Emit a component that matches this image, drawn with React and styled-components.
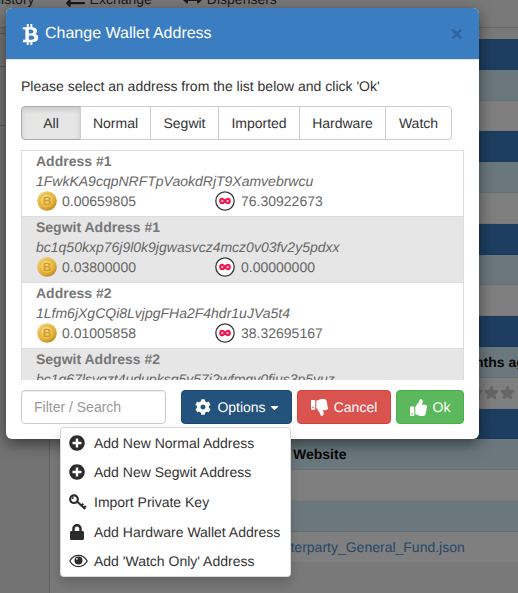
import React from "react";
import styled, { createGlobalStyle } from "styled-components";
import {
  FaBtc,
  FaCaretDown,
  FaCog,
  FaExchangeAlt,
  FaArrowsAltH,
  FaLock,
  FaPlusCircle,
  FaStar,
  FaThumbsDown,
  FaThumbsUp,
} from "react-icons/fa";

const GlobalStyle = createGlobalStyle`
  html, body {
    margin: 0;
    padding: 0;
    height: 593px;
    overflow: hidden;
    background: #fff;
    font-family: "Liberation Sans", Arial, sans-serif;
    font-size: 14px;
    color: #333;
    text-rendering: geometricPrecision;
  }
`;

const Page = styled.div`
  position: relative;
  width: 518px;
  height: 593px;
  overflow: hidden;
  background: #f2f2f2;
`;

/* page behind the modal */
const NavTabs = styled.div`
  display: flex;
  height: 27px;
  padding-left: 0;
  border-bottom: 1px solid #ccc;
  line-height: 20px;
`;

const NavTab = styled.span`
  display: flex;
  align-items: center;
  gap: 5px;
  height: 20px;
  margin-top: -11px;
  margin-left: ${(p) => p.$left}px;
`;

const Content = styled.div`
  display: flex;
  height: 565px;
`;

const Sidebar = styled.div`
  width: 49px;
  flex: none;
  background: #e6e6e6;
  border-right: 1px solid #c4c4c4;
`;

const SideItem = styled.div`
  height: ${(p) => p.$height}px;
  box-sizing: border-box;
  border-bottom: ${(p) => (p.$line ? "1px solid #bbb" : "none")};
`;

const Table = styled.div`
  flex: 1;
  padding: 11px 0 0 11px;
  min-width: 0;
`;

const TableRow = styled.div`
  height: 30.8px;
  background: ${(p) => p.$bg};
  border-bottom: 1px solid rgba(0, 0, 0, 0.05);
  box-sizing: border-box;
  display: flex;
  align-items: center;
  white-space: nowrap;
  overflow: hidden;
`;

const CellText = styled.span`
  font-weight: ${(p) => (p.$bold ? 700 : 400)};
  color: ${(p) => p.$color || "#111"};
  margin-left: ${(p) => p.$left}px;
  flex: none;
`;

const Stars = styled.span`
  display: flex;
  gap: 1px;
  margin-left: ${(p) => p.$left}px;
  flex: none;
  color: #ccc;
  font-size: 15px;
`;

const Backdrop = styled.div`
  position: absolute;
  inset: 0;
  background: rgba(0, 0, 0, 0.5);
`;

/* modal */
const Modal = styled.div`
  position: absolute;
  left: 6px;
  top: 8px;
  width: 473px;
  height: 431px;
  background: #fff;
  border-radius: 6px;
  box-shadow: 0 5px 15px rgba(0, 0, 0, 0.5);
  display: flex;
  flex-direction: column;
  overflow: hidden;
`;

const Header = styled.div`
  height: 52px;
  flex: none;
  background: #3a7dc1;
  color: #fff;
  display: flex;
  align-items: center;
  padding: 1px 16px 0 14px;
  font-size: 16px;
  border-bottom: 1px solid #e5e5e5;
  box-sizing: border-box;
`;

const Title = styled.span`
  flex: 1;
  display: flex;
  align-items: center;
  gap: 4px;
`;

const Close = styled.span`
  font-size: 21px;
  font-weight: 700;
  line-height: 1;
  color: #2e659c;
`;

const Body = styled.div`
  flex: 1;
  padding: 16px 15px 0 15px;
  display: flex;
  flex-direction: column;
  min-height: 0;
`;

const Intro = styled.div`
  line-height: 20px;
  margin-bottom: 10px;
`;

const FilterTabs = styled.div`
  display: flex;
  height: 34px;
  margin-bottom: 10px;
`;

const FilterTab = styled.div`
  display: flex;
  align-items: center;
  justify-content: center;
  box-sizing: border-box;
  width: ${(p) => p.$width + 1}px;
  margin-left: -1px;
  border: 1px solid ${(p) => (p.$active ? "#adadad" : "#ccc")};
  background: ${(p) => (p.$active ? "#e6e6e6" : "#fff")};
  box-shadow: ${(p) => (p.$active ? "inset 0 3px 5px rgba(0, 0, 0, 0.125)" : "none")};

  &:first-child {
    margin-left: 0;
    border-radius: 4px 0 0 4px;
  }
  &:last-child {
    border-radius: 0 4px 4px 0;
  }
`;

const AddressList = styled.div`
  height: 230px;
  flex: none;
  overflow: hidden;
  border-top: 1px solid #ddd;
  border-left: 1px solid #ddd;
  border-right: 1px solid #ddd;
  box-sizing: border-box;
`;

const AddressItem = styled.div`
  height: 66px;
  box-sizing: border-box;
  padding: 0 14px 0 14px;
  background: ${(p) => (p.$alt ? "#e6e6e6" : "#fff")};
  border-bottom: 1px solid #ddd;
  color: #666;
  line-height: 20px;
`;

const AddressName = styled.div`
  font-weight: 700;
  color: #777;
`;

const AddressValue = styled.div`
  font-style: italic;
  white-space: nowrap;
`;

const Balances = styled.div`
  display: flex;
  align-items: center;
  height: 20px;
  padding-left: 1px;
`;

const Balance = styled.div`
  width: 178px;
  display: flex;
  align-items: center;
  gap: ${(p) => p.$gap}px;
`;

const Footer = styled.div`
  display: flex;
  margin-top: 10px;
  height: 34px;
`;

const Search = styled.input`
  width: 145px;
  box-sizing: border-box;
  height: 34px;
  border: 1px solid #ccc;
  border-radius: 4px;
  padding: 0 12px;
  font: inherit;
  color: #555;
  margin-right: 15px;
  box-shadow: inset 0 1px 1px rgba(0, 0, 0, 0.075);

  &::placeholder {
    color: #999;
    opacity: 1;
  }
`;

const Button = styled.div`
  height: 34px;
  box-sizing: border-box;
  width: ${(p) => p.$width}px;
  margin-left: ${(p) => p.$gap || 0}px;
  padding-left: ${(p) => p.$pad || 0}px;
  display: flex;
  align-items: center;
  justify-content: center;
  gap: 6px;
  color: #fff;
  background: ${(p) => p.$bg};
  border: 1px solid ${(p) => p.$border};
  border-radius: 4px;
`;

const Caret = styled(FaCaretDown)`
  margin-left: -4px;
`;

const Menu = styled.div`
  position: absolute;
  left: 60px;
  top: 427px;
  width: 231px;
  height: 150px;
  box-sizing: border-box;
  background: #fff;
  border: 1px solid rgba(0, 0, 0, 0.15);
  border-radius: 4px;
  box-shadow: 0 6px 12px rgba(0, 0, 0, 0.175);
  display: flex;
  flex-direction: column;
`;

const MenuItem = styled.div`
  height: 30px;
  display: flex;
  align-items: center;
  white-space: nowrap;
  color: #333;
`;

const MenuIcon = styled.span`
  width: 33px;
  padding-left: 8px;
  flex: none;
  box-sizing: border-box;
  display: flex;
  align-items: center;
  color: #2b2b2b;
  font-size: 16px;
`;

const BitcoinCoin = () => (
  <svg width="20" height="20" viewBox="0 0 20 20">
    <defs>
      <radialGradient id="coin" cx="38%" cy="32%" r="75%">
        <stop offset="0%" stopColor="#f8e08a" />
        <stop offset="65%" stopColor="#e8b840" />
        <stop offset="100%" stopColor="#b5801a" />
      </radialGradient>
    </defs>
    <circle cx="10" cy="10" r="9.8" fill="url(#coin)" />
    <circle cx="10" cy="10" r="7.2" fill="none" stroke="#cf9c30" strokeWidth="0.6" />
    <text x="10" y="14.3" textAnchor="middle" fontFamily="Liberation Sans" fontWeight="700" fontSize="12" fill="#d29e32">
      B
    </text>
  </svg>
);

const XcpCoin = () => (
  <svg width="20" height="20" viewBox="0 0 20 20">
    <circle cx="10" cy="10" r="9.2" fill="#fff" stroke="#3a3a3a" strokeWidth="1.3" />
    <path
      d="M10 10 C9.2 8.8 8.2 7.9 7.2 7.9 C6 7.9 5.3 8.9 5.3 10 C5.3 11.1 6 12.1 7.2 12.1 C8.4 12.1 9.2 11.1 10 10 C10.8 8.9 11.6 7.9 12.8 7.9 C14 7.9 14.7 8.9 14.7 10 C14.7 11.1 14 12.1 12.8 12.1 C11.8 12.1 10.8 11.2 10 10 Z"
      fill="none"
      stroke="#f0174f"
      strokeWidth="2.2"
    />
  </svg>
);

const KeyIcon = () => (
  <svg width="18" height="16" viewBox="0 0 18 16">
    <circle cx="5" cy="5.2" r="3.8" fill="none" stroke="#2b2b2b" strokeWidth="2.2" />
    <circle cx="3.8" cy="4" r="0.9" fill="#2b2b2b" />
    <path d="M8 7.6 L16.2 15 M12.4 11.6 L14.4 9.8 M14.8 13.8 L16.8 12" fill="none" stroke="#2b2b2b" strokeWidth="2" />
  </svg>
);

const EyeIcon = () => (
  <svg width="19" height="14" viewBox="0 0 19 14">
    <path d="M0.8 7 C3 3.2 6 1.4 9.5 1.4 C13 1.4 16 3.2 18.2 7 C16 10.8 13 12.6 9.5 12.6 C6 12.6 3 10.8 0.8 7 Z" fill="none" stroke="#2b2b2b" strokeWidth="1.2" />
    <circle cx="9.5" cy="6.4" r="4" fill="#2b2b2b" />
    <circle cx="7.9" cy="4.8" r="0.9" fill="#fff" />
  </svg>
);

const darkRow = "#3a7dc1";
const lightRow = "#d5f0fc";
const plainRow = "#fff";

const rowColor = (i) => {
  if (i > 12) return i % 2 === 1 ? lightRow : plainRow;
  return [darkRow, lightRow, plainRow][i % 3];
};

const rows = Array.from({ length: 17 }, (_, i) => rowColor(i));

const rowContent = {
  10: <CellText $bold $left={393}>months ago</CellText>,
  11: (
    <Stars $left={407}>
      <FaStar />
      <FaStar />
      <FaStar />
    </Stars>
  ),
  13: <CellText $bold $left={232}>Website</CellText>,
  16: <CellText $color="#4a90d0" $left={196}>Counterparty_General_Fund.json</CellText>,
};

const addresses = [
  { name: "Address #1", value: "1FwkKA9cqpNRFTpVaokdRjT9Xamvebrwcu", btc: "0.00659805", xcp: "76.30922673" },
  { name: "Segwit Address #1", value: "bc1q50kxp76j9l0k9jgwasvcz4mcz0v03fv2y5pdxx", btc: "0.03800000", xcp: "0.00000000", alt: true },
  { name: "Address #2", value: "1Lfm6jXgCQi8LvjpgFHa2F4hdr1uJVa5t4", btc: "0.01005858", xcp: "38.32695167" },
  { name: "Segwit Address #2", value: "bc1q67lsvqzt4udupksq5v57i2wfmqv0fjus3p5yuz", alt: true },
];

const filters = [
  { label: "All", width: 59 },
  { label: "Normal", width: 70 },
  { label: "Segwit", width: 68 },
  { label: "Imported", width: 81 },
  { label: "Hardware", width: 86 },
  { label: "Watch", width: 66 },
];

const menu = [
  { icon: <FaPlusCircle />, label: "Add New Normal Address" },
  { icon: <FaPlusCircle />, label: "Add New Segwit Address" },
  { icon: <KeyIcon />, label: "Import Private Key" },
  { icon: <FaLock />, label: "Add Hardware Wallet Address" },
  { icon: <EyeIcon />, label: "Add 'Watch Only' Address" },
];

const App = () => (
  <Page>
    <GlobalStyle />
    <NavTabs>
      <NavTab $left={-9}>History</NavTab>
      <NavTab $left={31}>
        <FaExchangeAlt size={19} /> Exchange
      </NavTab>
      <NavTab $left={31}>
        <FaArrowsAltH size={19} /> Dispensers
      </NavTab>
    </NavTabs>
    <Content>
      <Sidebar>
        <SideItem $height={6} $line />
        <SideItem $height={33} $line />
        <SideItem $height={59} $line />
      </Sidebar>
      <Table>
        {rows.map((bg, i) => (
          <TableRow key={i} $bg={bg}>
            {rowContent[i]}
          </TableRow>
        ))}
      </Table>
    </Content>
    <Backdrop />
    <Modal>
      <Header>
        <Title>
          <FaBtc size={21} /> Change Wallet Address
        </Title>
        <Close>×</Close>
      </Header>
      <Body>
        <Intro>Please select an address from the list below and click 'Ok'</Intro>
        <FilterTabs>
          {filters.map((f, i) => (
            <FilterTab key={f.label} $active={i === 0} $width={f.width}>
              {f.label}
            </FilterTab>
          ))}
        </FilterTabs>
        <AddressList>
          {addresses.map((a) => (
            <AddressItem key={a.name} $alt={a.alt}>
              <AddressName>{a.name}</AddressName>
              <AddressValue>{a.value}</AddressValue>
              {a.btc && (
                <Balances>
                  <Balance $gap={5}>
                    <BitcoinCoin /> {a.btc}
                  </Balance>
                  <Balance $gap={6}>
                    <XcpCoin /> {a.xcp}
                  </Balance>
                </Balances>
              )}
            </AddressItem>
          ))}
        </AddressList>
        <Footer>
          <Search placeholder="Filter / Search" />
          <Button $width={111} $pad={3} $bg="#23527c" $border="#1f4a70">
            <FaCog size={16} /> Options <Caret size={13} />
          </Button>
          <Button $width={94} $gap={5} $bg="#d9534f" $border="#d43f3a">
            <FaThumbsDown size={17} /> Cancel
          </Button>
          <Button $width={68} $gap={5} $bg="#5cb85c" $border="#4cae4c">
            <FaThumbsUp size={17} /> Ok
          </Button>
        </Footer>
      </Body>
    </Modal>
    <Menu>
      {menu.map((m) => (
        <MenuItem key={m.label}>
          <MenuIcon>{m.icon}</MenuIcon>
          {m.label}
        </MenuItem>
      ))}
    </Menu>
  </Page>
);

export default App;
